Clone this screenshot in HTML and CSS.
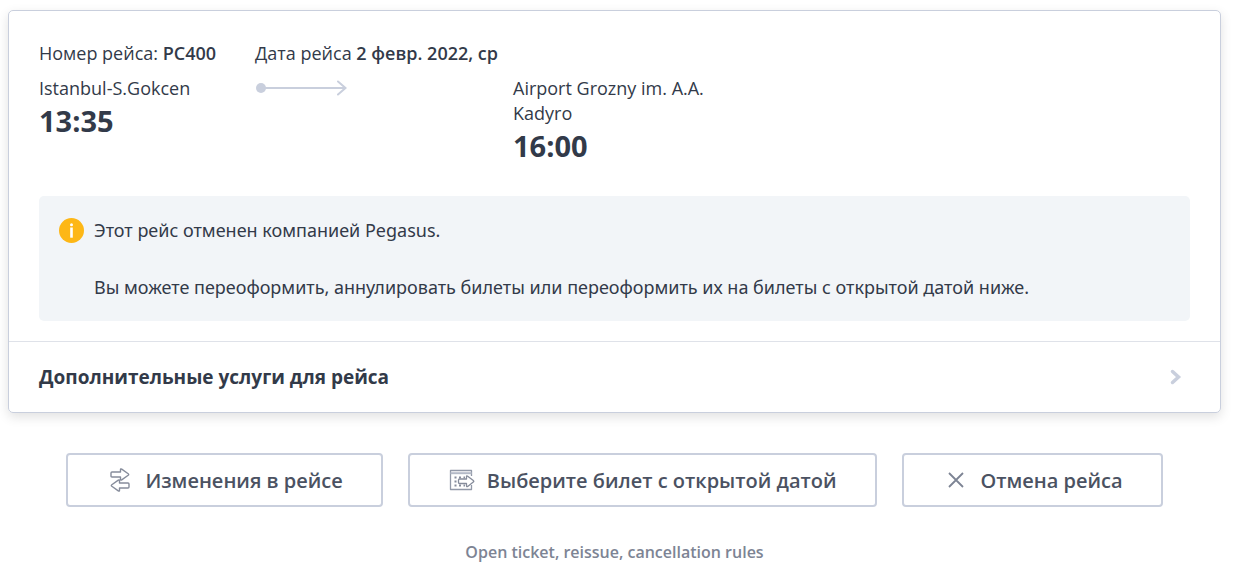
FILE: index.html
```
<!DOCTYPE html>
<html lang="ru">
<head>
  <meta charset="UTF-8" />
  <meta name="viewport" content="width=device-width, initial-scale=1.0" />
  <title>Рейс PC400</title>
  <link rel="stylesheet" href="styles.css">
</head>
<body>
  <main class="page">
    <section class="card">
      <div class="card-body">
        <div class="flight">
          <p>Номер рейса: <strong>PC400</strong></p>
          <p class="flight-date">Дата рейса <strong>2 февр. 2022, ср</strong></p>
          <div class="stop">
            <p>Istanbul-S.Gokcen</p>
            <time class="time">13:35</time>
          </div>
          <svg class="route" width="92" height="16" viewBox="0 0 92 16" fill="none" stroke="#c9cfdd" stroke-width="2" stroke-linecap="round" aria-hidden="true">
            <circle cx="6" cy="8" r="5" fill="#c9cfdd" stroke="none" />
            <path d="M6 8H90M83 1.500l7.500 6.500-7.500 6.500" />
          </svg>
          <div class="stop">
            <p>Airport Grozny im. A.A. Kadyro</p>
            <time class="time">16:00</time>
          </div>
        </div>
        <div class="notice">
          <svg class="notice-icon" width="25" height="25" viewBox="0 0 25 25" aria-hidden="true">
            <circle cx="12.500" cy="12.500" r="12.500" fill="#fdb716" />
            <circle cx="12.500" cy="6.700" r="1.500" fill="#fff" />
            <path d="M11.200 9.500h2.600v10.200h-2.600z" fill="#fff" />
          </svg>
          <div class="notice-text">
            <p>Этот рейс отменен компанией Pegasus.</p>
            <p>Вы можете переоформить, аннулировать билеты или переоформить их на билеты с открытой датой ниже.</p>
          </div>
        </div>
      </div>
      <button class="extras" type="button">
        Дополнительные услуги для рейса
        <svg width="12" height="18" viewBox="0 0 12 18" fill="none" stroke="#c9cfdd" stroke-width="3.500" stroke-linecap="round" aria-hidden="true">
          <path d="M2.500 3.500l6 5.500-6 5.500" />
        </svg>
      </button>
    </section>

    <div class="actions">
      <button class="action" type="button">
        <svg width="26" height="26" viewBox="0 0 26 26" fill="none" stroke="#868c9b" stroke-width="1.400" stroke-linejoin="round" aria-hidden="true">
          <path d="M5 5h8.500V2.800q0-1.400 1.200-.7l6.500 4.600q1 .8 0 1.600l-6.500 4.600q-1.200.7-1.200-.7V10H5q-1 0-1-1V6q0-1 1-1z" />
          <path d="M21 16h-8.500v-2.200q0-1.400-1.200-.7l-6.500 4.600q-1 .8 0 1.600l6.500 4.600q1.200.7 1.200-.7V21H21q1 0 1-1v-3q0-1-1-1z" />
        </svg>
        Изменения в рейсе
      </button>
      <button class="action" type="button">
        <svg width="26" height="26" viewBox="0 0 26 26" fill="none" stroke="#868c9b" stroke-width="1.300" stroke-linejoin="round" aria-hidden="true">
          <path d="M22.500 9V3.500h-21v19h21V18" stroke="#9299a8" />
          <path d="M1.500 6.200h21" stroke="#b4bac7" stroke-width="2" />
          <path d="M5.500 10.500h2M10 10.500h2M14.500 10.500h1.500M5.500 14.500h2M5.500 18.500h2M10 18.500h2M14.500 18.500h1.500" stroke-width="1.800" />
          <path d="M10.500 12h7V9.800q0-1.400 1.200-.6l5.600 4.300q1 .8 0 1.600l-5.600 4.300q-1.200.8-1.200-.6V16.500h-7q-1 0-1-1V13q0-1 1-1z" fill="#fff" />
        </svg>
        Выберите билет с открытой датой
      </button>
      <button class="action" type="button">
        <svg width="26" height="26" viewBox="0 0 26 26" fill="none" stroke="#7d8494" stroke-width="1.800" aria-hidden="true">
          <path d="M6 6l14 14M20 6L6 20" />
        </svg>
        Отмена рейса
      </button>
    </div>
    <a class="rules" href="#">Open ticket, reissue, cancellation rules</a>
  </main>
</body>
</html>
```
FILE: styles.css
```
* {
  box-sizing: border-box;
}
body {
  margin: 0;
  background-color: #fff;
  color: #323a49;
  font-family: "Open Sans", sans-serif;
  font-size: 18px;
  line-height: 25px;
}
p {
  margin: 0;
}
strong {
  font-weight: 600;
}
button {
  font-family: inherit;
  cursor: pointer;
}
.page {
  padding: 10px 31px 0 8px;
}
.card {
  border: 1px solid #c9cfdd;
  border-radius: 5px;
  box-shadow: 0 4px 12px rgba(0, 0, 0, 0.12);
}
.card-body {
  padding: 30px 30px 20px;
}
.flight {
  display: grid;
  grid-template-columns: 216px 258px 200px;
  row-gap: 10px;
}
.flight-date {
  grid-column: 2 / 4;
}
.route {
  margin-top: 4px;
}
.time {
  display: block;
  font-size: 29px;
  font-weight: 700;
  line-height: 40px;
}
.notice {
  display: flex;
  gap: 10px;
  margin-top: 30px;
  padding: 22px 20px 21px;
  border-radius: 5px;
  background-color: #f2f5f8;
}
.notice-icon {
  flex: none;
}
.notice-text {
  display: grid;
  gap: 32px;
  font-family: "Noto Sans", sans-serif;
}
.extras {
  display: flex;
  align-items: center;
  justify-content: space-between;
  width: 100%;
  height: 71px;
  padding: 0 38px 0 30px;
  border: 0;
  border-top: 1px solid #dfe2e9;
  background: none;
  color: inherit;
  font-size: 19px;
  font-weight: 700;
}
.actions {
  display: flex;
  justify-content: center;
  gap: 25px;
  margin-top: 40px;
}
.action {
  display: flex;
  align-items: center;
  justify-content: center;
  gap: 12px;
  height: 54px;
  padding: 0 38px 0 39px;
  border: 2px solid #c9cfdd;
  border-radius: 4px;
  background-color: #fff;
  color: #4b5262;
  font-size: 20px;
  font-weight: 600;
}
.rules {
  display: block;
  width: fit-content;
  margin: 33px auto 0;
  color: #7d8494;
  font-size: 16px;
  font-weight: 600;
  text-decoration: none;
}
```
